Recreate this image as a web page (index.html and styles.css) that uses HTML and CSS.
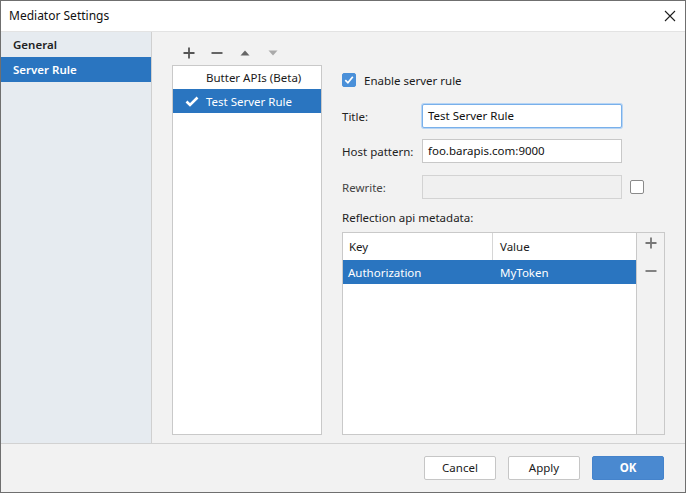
FILE: index.html
```html
<!DOCTYPE html>
<html lang="en">
<head>
<meta charset="utf-8">
<title>Mediator Settings</title>
<link rel="stylesheet" href="styles.css">
</head>
<body>
<div class="window">
  <header class="titlebar">
    <span class="title">Mediator Settings</span>
    <svg class="close" width="12" height="12" viewBox="0 0 12 12"><path d="M1 1 L11 11 M11 1 L1 11" stroke="#1e1e1e" stroke-width="1.1" fill="none"/></svg>
  </header>
  <div class="main">
    <nav class="sidebar">
      <div class="nav-item">General</div>
      <div class="nav-item active">Server Rule</div>
    </nav>
    <section class="content">
      <div class="rules">
        <div class="toolbar">
          <span class="tool"><svg width="12" height="12" viewBox="0 0 12 12"><path d="M6 0.5 V11.5 M0.5 6 H11.5" stroke="#555" stroke-width="1.8"/></svg></span>
          <span class="tool"><svg width="12" height="12" viewBox="0 0 12 12"><path d="M0.5 6 H11.5" stroke="#555" stroke-width="1.8"/></svg></span>
          <span class="tool"><svg width="10" height="6" viewBox="0 0 10 6"><path d="M0.5 5.5 L5 0.5 L9.5 5.5 Z" fill="#666"/></svg></span>
          <span class="tool"><svg width="10" height="6" viewBox="0 0 10 6"><path d="M0.5 0.5 L5 5.5 L9.5 0.5 Z" fill="#aaa"/></svg></span>
        </div>
        <ul class="rule-list">
          <li class="rule"><span class="rule-mark"></span>Butter APIs (Beta)</li>
          <li class="rule selected"><span class="rule-mark"><svg width="14" height="11" viewBox="0 0 14 11"><path d="M1.5 5.5 L5 9 L12.5 1.5" stroke="#fff" stroke-width="2.6" fill="none"/></svg></span>Test Server Rule</li>
        </ul>
      </div>
      <div class="form">
        <label class="check-row">
          <span class="checkbox checked"><svg width="14" height="14" viewBox="0 0 14 14"><path d="M3.3 7.2 L5.9 9.8 L10.8 3.8" stroke="#fff" stroke-width="1.7" fill="none"/></svg></span>
          <span class="check-label">Enable server rule</span>
        </label>
        <div class="field field-title">
          <span class="field-label">Title:</span>
          <span class="input focused">Test Server Rule</span>
        </div>
        <div class="field field-host">
          <span class="field-label">Host pattern:</span>
          <span class="input">foo.barapis.com:9000</span>
        </div>
        <div class="field field-rewrite">
          <span class="field-label dim">Rewrite:</span>
          <span class="input disabled"></span>
          <span class="checkbox"></span>
        </div>
        <div class="meta-label">Reflection api metadata:</div>
        <div class="meta">
          <div class="grid">
            <div class="grid-head">
              <span class="cell key head-key">Key</span>
              <span class="cell value">Value</span>
            </div>
            <div class="grid-row selected">
              <span class="cell key">Authorization</span>
              <span class="cell value">MyToken</span>
            </div>
          </div>
          <div class="grid-side">
            <span class="side-btn"><svg width="12" height="12" viewBox="0 0 12 12"><path d="M6 0.5 V11.5 M0.5 6 H11.5" stroke="#777" stroke-width="1.8"/></svg></span>
            <span class="side-btn"><svg width="12" height="12" viewBox="0 0 12 12"><path d="M0.5 6 H11.5" stroke="#777" stroke-width="1.8"/></svg></span>
          </div>
        </div>
      </div>
    </section>
  </div>
  <footer class="footer">
    <button class="btn">Cancel</button>
    <button class="btn">Apply</button>
    <button class="btn primary">OK</button>
  </footer>
</div>
</body>
</html>
```

FILE: styles.css
```css
* { box-sizing: border-box; }
html, body { margin: 0; padding: 0; }
body {
  font-family: "Noto Sans", "Open Sans", sans-serif;
  font-size: 11.5px;
  color: #1a1a1a;
  background: #f2f2f2;
}
.window {
  width: 686px;
  height: 493px;
  border: 1px solid #6f6f6f;
  display: flex;
  flex-direction: column;
  background: #f2f2f2;
}
.titlebar {
  height: 31px;
  flex: none;
  background: #fff;
  border-bottom: 1px solid #e3e3e3;
  display: flex;
  align-items: center;
  justify-content: space-between;
  padding: 0 9px 1px 8px;
}
.title { font-size: 12px; color: #111; }
.close { display: block; margin-right: 0; }
.main {
  flex: 1;
  display: flex;
  min-height: 0;
  border-bottom: 1px solid #d2d2d2;
}
.sidebar {
  width: 151px;
  flex: none;
  background: #e6ebf0;
  border-right: 1px solid #d0d0d0;
  padding-top: 1px;
}
.nav-item {
  height: 24px;
  line-height: 24px;
  padding-left: 12px;
  font-weight: 600;
  color: #222;
}
.nav-item.active { background: #2a75c0; color: #fff; height: 25px; line-height: 25px; }
.content {
  flex: 1;
  display: flex;
  gap: 20px;
  padding: 9px 20px 8px 20px;
  min-width: 0;
}
.rules {
  width: 150px;
  flex: none;
  display: flex;
  flex-direction: column;
}
.toolbar {
  height: 24px;
  display: flex;
  align-items: center;
  padding-left: 3px;
}
.tool {
  width: 28px;
  height: 24px;
  display: flex;
  align-items: center;
  justify-content: center;
}
.tool svg { display: block; }
.rule-list {
  flex: 1;
  margin: 0;
  padding: 0;
  list-style: none;
  background: #fff;
  border: 1px solid #c9c9c9;
}
.rule {
  height: 23px;
  display: flex;
  align-items: center;
  padding-left: 12px;
  color: #1a1a1a;
}
.rule.selected { background: #2a75c0; color: #fff; height: 24px; }
.rule-mark {
  width: 14px;
  margin-right: 7px;
  display: flex;
  align-items: center;
}
.rule-mark svg { display: block; }
.form {
  width: 323px;
  flex: none;
  margin-top: 24px;
  display: flex;
  flex-direction: column;
}
.check-row {
  height: 30px;
  display: flex;
  align-items: center;
}
.checkbox {
  width: 14px;
  height: 14px;
  border: 1px solid #8a8a8a;
  border-radius: 2px;
  background: #fff;
  flex: none;
  display: block;
}
.checkbox.checked { background: #4a90d9; border-color: #4a90d9; }
.checkbox svg { display: block; margin: -1px; }
.check-label { margin-left: 8px; }
.field {
  height: 24px;
  display: flex;
  align-items: center;
}
.field-title { margin-top: 9px; }
.field-host { margin-top: 11px; }
.field-rewrite { margin-top: 12px; }
.field-label { width: 80px; flex: none; color: #222; }
.field-label.dim { color: #444; }
.input {
  width: 200px;
  height: 24px;
  border: 1px solid #c8c8c8;
  background: #fff;
  padding-left: 5px;
  line-height: 22px;
  white-space: nowrap;
  color: #111;
}
.input.focused {
  border-color: #79b0ea;
  box-shadow: 0 0 0 1px #b7d5f5;
  border-radius: 2px;
}
.input.disabled { background: #f0f0f0; border-color: #d3d3d3; }
.field-rewrite .checkbox { margin-left: 8px; }
.meta-label {
  margin-top: 9px;
  height: 20px;
  line-height: 20px;
  color: #222;
}
.meta {
  margin-top: 4px;
  flex: 1;
  display: flex;
  border: 1px solid #c9c9c9;
  background: #f2f2f2;
}
.grid {
  flex: 1;
  background: #fff;
  border-right: 1px solid #c9c9c9;
}
.grid-head {
  height: 27px;
  display: flex;
  align-items: stretch;
  color: #1a1a1a;
}
.grid-row {
  height: 24px;
  display: flex;
}
.grid-row.selected { background: #2a75c0; color: #fff; }
.cell {
  display: flex;
  align-items: center;
}
.cell.key { width: 150px; padding-left: 5px; }
.cell.head-key { border-right: 1px solid #d6d6d6; padding-left: 6px; }
.cell.value { padding-left: 7px; }
.grid-side {
  width: 27px;
  flex: none;
  display: flex;
  flex-direction: column;
  align-items: center;
}
.side-btn {
  width: 27px;
  height: 20px;
  display: flex;
  align-items: center;
  justify-content: center;
}
.side-btn + .side-btn { margin-top: 8px; }
.side-btn svg { display: block; }
.footer {
  height: 48px;
  flex: none;
  display: flex;
  justify-content: flex-end;
  align-items: center;
  gap: 12px;
  padding-right: 21px;
  padding-bottom: 1px;
}
.btn {
  width: 72px;
  height: 24px;
  border: 1px solid #c6c6c6;
  border-radius: 2px;
  background: #fff;
  font-family: "Noto Sans", "Open Sans", sans-serif;
  font-size: 11.5px;
  color: #1a1a1a;
  padding: 0;
}
.btn.primary {
  background: #4a89d0;
  border-color: #4583cb;
  color: #fff;
  font-weight: 700;
}
```
